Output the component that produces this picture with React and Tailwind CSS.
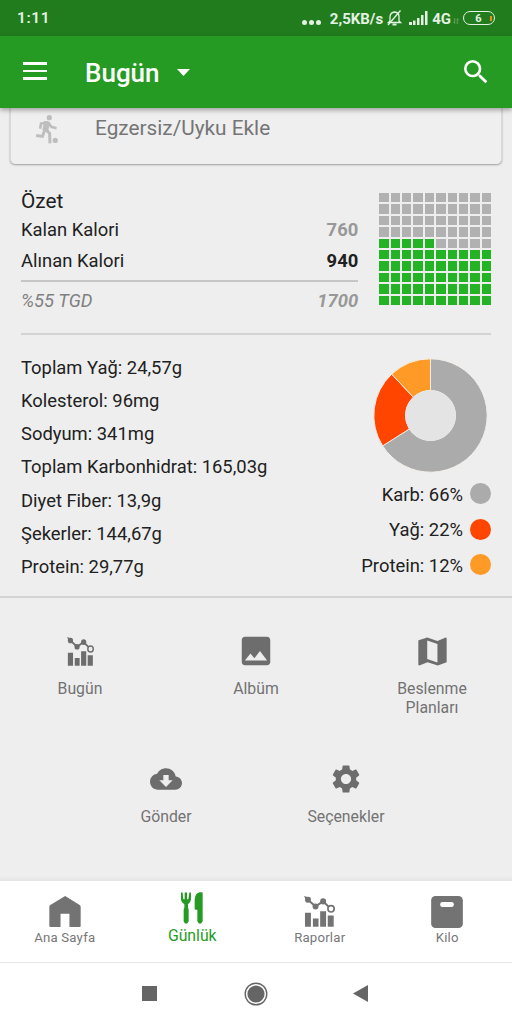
import React from 'react';
import { MdSearch, MdImage, MdCloudDownload, MdSettings } from 'react-icons/md';

// --- Data ---
const NUTRIENTS = [
  'Toplam Yağ: 24,57g',
  'Kolesterol: 96mg',
  'Sodyum: 341mg',
  'Toplam Karbonhidrat: 165,03g',
  'Diyet Fiber: 13,9g',
  'Şekerler: 144,67g',
  'Protein: 29,77g',
];

const MACROS = [
  { label: 'Karb', value: 66, fill: '#ababab', dot: 'bg-[#ababab]' },
  { label: 'Yağ', value: 22, fill: '#ff4500', dot: 'bg-[#ff4500]' },
  { label: 'Protein', value: 12, fill: '#ff9a26', dot: 'bg-[#ff9a26]' },
];

// --- Icons ---
const ChartIcon = ({ className }) => (
  <svg viewBox="0 0 94 92" preserveAspectRatio="none" className={className} fill="currentColor">
    <path d="M3 50h18v41H3zM27 67h17v24H27zM49 45h18v46H49zM72 58h18v33H72z" />
    <path d="M0 0l20 6-10 13z" />
    <path d="M12 11l23 20 23-15 18 17" fill="none" stroke="currentColor" strokeWidth="6" />
    <circle cx="12" cy="11" r="9" />
    <circle cx="35" cy="31" r="9" />
    <circle cx="58" cy="16" r="9" />
    <circle cx="82" cy="38" r="9.5" fill="none" stroke="currentColor" strokeWidth="5" />
  </svg>
);

const RunnerIcon = () => (
  <svg viewBox="0 0 66 88" className="h-[29px] w-[22px] text-[#bebebe]" fill="none" stroke="currentColor">
    <circle cx="40" cy="8" r="8" fill="currentColor" stroke="none" />
    <circle cx="58" cy="77" r="8" fill="currentColor" stroke="none" />
    <path d="M33 20L28 48" strokeWidth="18" />
    <path d="M37 22L15 26L12 42" strokeWidth="8" />
    <path d="M36 22L46 36L62 40" strokeWidth="8" />
    <path d="M27 44L19 65L0 62" strokeWidth="9" />
    <path d="M29 44L41 56L42 86" strokeWidth="9" />
  </svg>
);

const MapIcon = () => (
  <svg viewBox="0 0 88 87" className="h-[29px] w-[29px]" fill="currentColor" fillRule="evenodd">
    <path d="M2 9L28 1L59 12L84 1q3 0 3 3V76L60 86L29 76L4 86q-3 0-3-3V11zM28 10V66L59 77V21z" />
  </svg>
);

const HomeIcon = () => (
  <svg viewBox="0 0 95 94" className="h-[31px] w-[32px]" fill="currentColor">
    <path d="M48 0L92 27q3 2 3 6V91q0 3-3 3H61V54H34V94H3q-3 0-3-3V33q0-4 3-6z" />
  </svg>
);

const CutleryIcon = () => (
  <svg viewBox="0 0 66 95" className="h-[32px] w-[22px]" fill="currentColor">
    <path d="M0 2q3-3 5 0L7 21h4V2q4-4 7 0V21h4L25 2q3-3 5 0V23q-2 9-9 13V47q2 3 2 6V88q-8 14-15 0V53q0-3 2-6V36Q1 32 0 23z" />
    <path d="M65 2V87q-8 15-16 0V53H44q-3 0-3-4V21Q43 2 56 0h6q3 0 3 2z" />
  </svg>
);

const ScaleIcon = () => (
  <svg viewBox="0 0 95 96" className="h-[32px] w-[32px]">
    <rect width="95" height="96" rx="13" fill="currentColor" />
    <rect x="27" y="18" width="41" height="15" rx="7" fill="white" />
  </svg>
);

const BellOffIcon = () => (
  <svg viewBox="0 0 15 16" className="ml-[4px] h-[16px] w-[15px]" fill="none" stroke="currentColor" strokeWidth="1.3">
    <path d="M1.5 12.5L3 11V6.5Q3.5 2.5 7.5 2Q12 2.5 12 6.5V11L13.5 12.5z" />
    <path d="M5.5 14.5h4" strokeWidth="2" />
    <path d="M1 15L13.5 .5" />
  </svg>
);

// --- Status bar ---
const StatusBar = () => (
  <div className="flex h-9 shrink-0 items-center bg-[#217c1e] pl-[17px] pr-[17px] text-[#e3f2e2]">
    <span className="pt-[2px] text-[15.5px] font-semibold tracking-[0.6px]">1:11</span>
    <div className="ml-auto flex items-center">
      <div className="mr-[9px] mt-[8px] flex gap-[2px]">
        <i className="h-[5px] w-[5px] rounded-full bg-current" />
        <i className="h-[5px] w-[5px] rounded-full bg-current" />
        <i className="h-[5px] w-[5px] rounded-full bg-current" />
      </div>
      <span className="pt-[2px] text-[15px] font-bold">2,5KB/s</span>
      <BellOffIcon />
      <svg viewBox="0 0 19 14" className="ml-[7px] h-[14px] w-[19px]" fill="currentColor">
        <path d="M0 11h3v3H0zM4 9.5h2.5V14H4zM8 7h2.5v7H8zM12 4h2.5v10H12zM16 0h2.5v14H16z" />
      </svg>
      <span className="ml-[4px] pt-[2px] text-[15px] font-bold">4G</span>
      <svg viewBox="0 0 6 7" className="ml-[2px] mt-[6px] h-[6px] w-[6px] opacity-50" fill="none" stroke="currentColor" strokeWidth=".8">
        <path d="M1.5 0v6M0 4.5L1.5 6.5M4.5 7V1M4.5 .5L6 2.5" />
      </svg>
      <div className="ml-[4px] flex h-[14px] w-[32px] items-center rounded-full border-[1.5px] border-current pr-[2px]">
        <span className="flex-1 pl-[3px] text-center text-[11px] font-bold leading-none">6</span>
        <i className="h-[5px] w-[2px] bg-[#f28c1c]" />
      </div>
    </div>
  </div>
);

const AppBar = () => (
  <header className="z-10 flex h-[72px] shrink-0 items-center bg-[#259b24] pl-[23px] pr-[20px] text-white shadow-[0_2px_5px_rgba(0,0,0,0.35)]">
    <div className="mb-[2px] flex flex-col gap-[5px]">
      <i className="h-[2.5px] w-[24px] bg-white" />
      <i className="h-[2.5px] w-[24px] bg-white" />
      <i className="h-[2.5px] w-[24px] bg-white" />
    </div>
    <h1 className="ml-[38px] pt-[2px] text-[26px] font-medium">Bugün</h1>
    <svg viewBox="0 0 13 7" className="ml-[17px] h-[7px] w-[13px]" fill="currentColor">
      <path d="M0 0h13L6.5 7z" />
    </svg>
    <MdSearch className="ml-auto h-[32px] w-[32px]" />
  </header>
);

// --- Summary ---
// 10x10 grid, 55 cells eaten: the last five rows plus half of the fifth
const CalorieGrid = () => (
  <div className="ml-[21px] mt-[4px] grid h-[112px] w-[112px] grid-cols-10 grid-rows-10 gap-[2px]">
    {Array.from({ length: 100 }, (_, i) => {
      const eaten = i >= 50 || (i >= 40 && i < 45);
      return <i key={i} className={eaten ? 'bg-[#24b324]' : 'bg-[#b1b1b1]'} />;
    })}
  </div>
);

const point = (r, pct) => {
  const a = (pct / 100) * 2 * Math.PI;
  return `${57.5 + r * Math.sin(a)} ${57.5 - r * Math.cos(a)}`;
};

const Donut = () => {
  let start = 0;
  return (
    <svg viewBox="0 0 115 115" className="mr-[3px] h-[115px] w-[115px]">
      {MACROS.map(({ label, value, fill }) => {
        const end = start + value;
        const big = value > 50 ? 1 : 0;
        const d = `M${point(56.7, start)}A56.7 56.7 0 ${big} 1 ${point(56.7, end)}L${point(25, end)}A25 25 0 ${big} 0 ${point(25, start)}z`;
        start = end;
        return <path key={label} d={d} fill={fill} stroke="#f4efe9" strokeWidth="1" />;
      })}
      <circle cx="57.5" cy="57.5" r="25.3" fill="#e4e4e4" />
    </svg>
  );
};

const Summary = () => (
  <section className="mx-[21px] mt-[25px] flex h-[146px] border-b-2 border-[#d3d3d3] text-[18.4px] text-[#212121]">
    <div className="w-[338px]">
      <h2 className="h-[26px] text-[20.8px] leading-[25px]">Özet</h2>
      <div className="flex h-[30px] items-center justify-between">
        <span>Kalan Kalori</span>
        <b className="text-[#989898]">760</b>
      </div>
      <div className="flex h-[31px] items-center justify-between">
        <span>Alınan Kalori</span>
        <b>940</b>
      </div>
      <div className="mt-[4px] flex h-[40px] items-center justify-between border-t-2 border-[#c6c6c6] italic text-[#808080]">
        <span>%55 TGD</span>
        <b className="text-[#989898]">1700</b>
      </div>
    </div>
    <CalorieGrid />
  </section>
);

const Nutrition = () => (
  <section className="flex h-[263px] justify-between border-b-2 border-[#d3d3d3] pl-[21px] pr-[21px] text-[18.4px] text-[#212121]">
    <ul className="pt-[16px]">
      {NUTRIENTS.map((n) => (
        <li key={n} className="flex h-[33.2px] items-center">{n}</li>
      ))}
    </ul>
    <div className="flex flex-col items-end pt-[23px]">
      <Donut />
      <ul className="mt-[3px]">
        {MACROS.map(({ label, value, dot }) => (
          <li key={label} className="flex h-[35.5px] items-center justify-end gap-[7px]">
            <span className="pt-[2px]">{label}: {value}%</span>
            <i className={`h-[21px] w-[21px] rounded-full ${dot}`} />
          </li>
        ))}
      </ul>
    </div>
  </section>
);

const Action = ({ icon, label }) => (
  <div className="flex w-[100px] flex-col items-center text-center text-[15.8px] leading-[18.7px] text-[#737373]">
    <div className="mb-[11px] flex h-[36px] items-center justify-center text-[#6d6d6d]">{icon}</div>
    {label}
  </div>
);

const Actions = () => (
  <section className="flex flex-col pt-[35px]">
    <div className="flex justify-center gap-[76px]">
      <Action icon={<ChartIcon className="h-[29px] w-[27px]" />} label="Bugün" />
      <Action icon={<MdImage className="h-[38px] w-[38px]" />} label="Albüm" />
      <Action icon={<MapIcon />} label="Beslenme Planları" />
    </div>
    <div className="mt-[44px] flex justify-center gap-[80px]">
      <Action icon={<MdCloudDownload className="h-[32px] w-[32px]" />} label="Gönder" />
      <Action icon={<MdSettings className="h-[34px] w-[34px]" />} label="Seçenekler" />
    </div>
  </section>
);

// --- Bottom bars ---
const Tab = ({ icon, label }) => (
  <div className="flex flex-1 flex-col items-center pt-[14px] text-[13.2px] leading-[20px] tracking-[0.2px] text-[#777]">
    <div className="flex h-[33px] items-center text-[#737373]">{icon}</div>
    {label}
  </div>
);

const TabBar = () => (
  <nav className="flex h-[82px] shrink-0 border-b border-[#e4e4e4] bg-white px-[1px]">
    <Tab icon={<HomeIcon />} label="Ana Sayfa" />
    <div className="flex flex-1 flex-col items-center pt-[11px] text-[15.8px] leading-[23px] text-[#259b24]">
      <CutleryIcon />
      Günlük
    </div>
    <Tab icon={<ChartIcon className="h-[31px] w-[31px]" />} label="Raporlar" />
    <Tab icon={<ScaleIcon />} label="Kilo" />
  </nav>
);

const SystemNav = () => (
  <div className="flex h-[61px] shrink-0 items-center justify-center bg-white pr-[2px] text-[#656565]">
    <i className="h-[15px] w-[15px] bg-current" />
    <svg viewBox="0 0 24 24" className="ml-[87px] h-[24px] w-[24px]">
      <circle cx="12" cy="12" r="10.8" fill="none" stroke="currentColor" strokeWidth="1.4" />
      <circle cx="12" cy="12" r="8.6" fill="currentColor" />
    </svg>
    <svg viewBox="0 0 15 17" className="ml-[85px] h-[17px] w-[15px]" fill="currentColor">
      <path d="M15 0v17L0 8.5z" />
    </svg>
  </div>
);

const App = () => {
  return (
    <div className="flex h-[1024px] w-[512px] flex-col overflow-hidden bg-[#eee] font-[Roboto,sans-serif]">
      <StatusBar />
      <AppBar />
      <main className="flex-1 overflow-hidden">
        <div className="mx-[10px] flex h-[56px] items-center rounded-b-[5px] border-x border-[#d9d9d9] bg-[#efefef] pb-[14px] pl-[25px] text-[20.8px] text-[#757575] shadow-[0_1px_2px_rgba(0,0,0,0.35)]">
          <RunnerIcon />
          <span className="ml-[37px]">Egzersiz/Uyku Ekle</span>
        </div>
        <Summary />
        <Nutrition />
        <Actions />
      </main>
      <div className="h-[5px] shrink-0 bg-gradient-to-b from-[#eee] to-[#e4e4e4]" />
      <TabBar />
      <SystemNav />
    </div>
  );
};

export default App;
